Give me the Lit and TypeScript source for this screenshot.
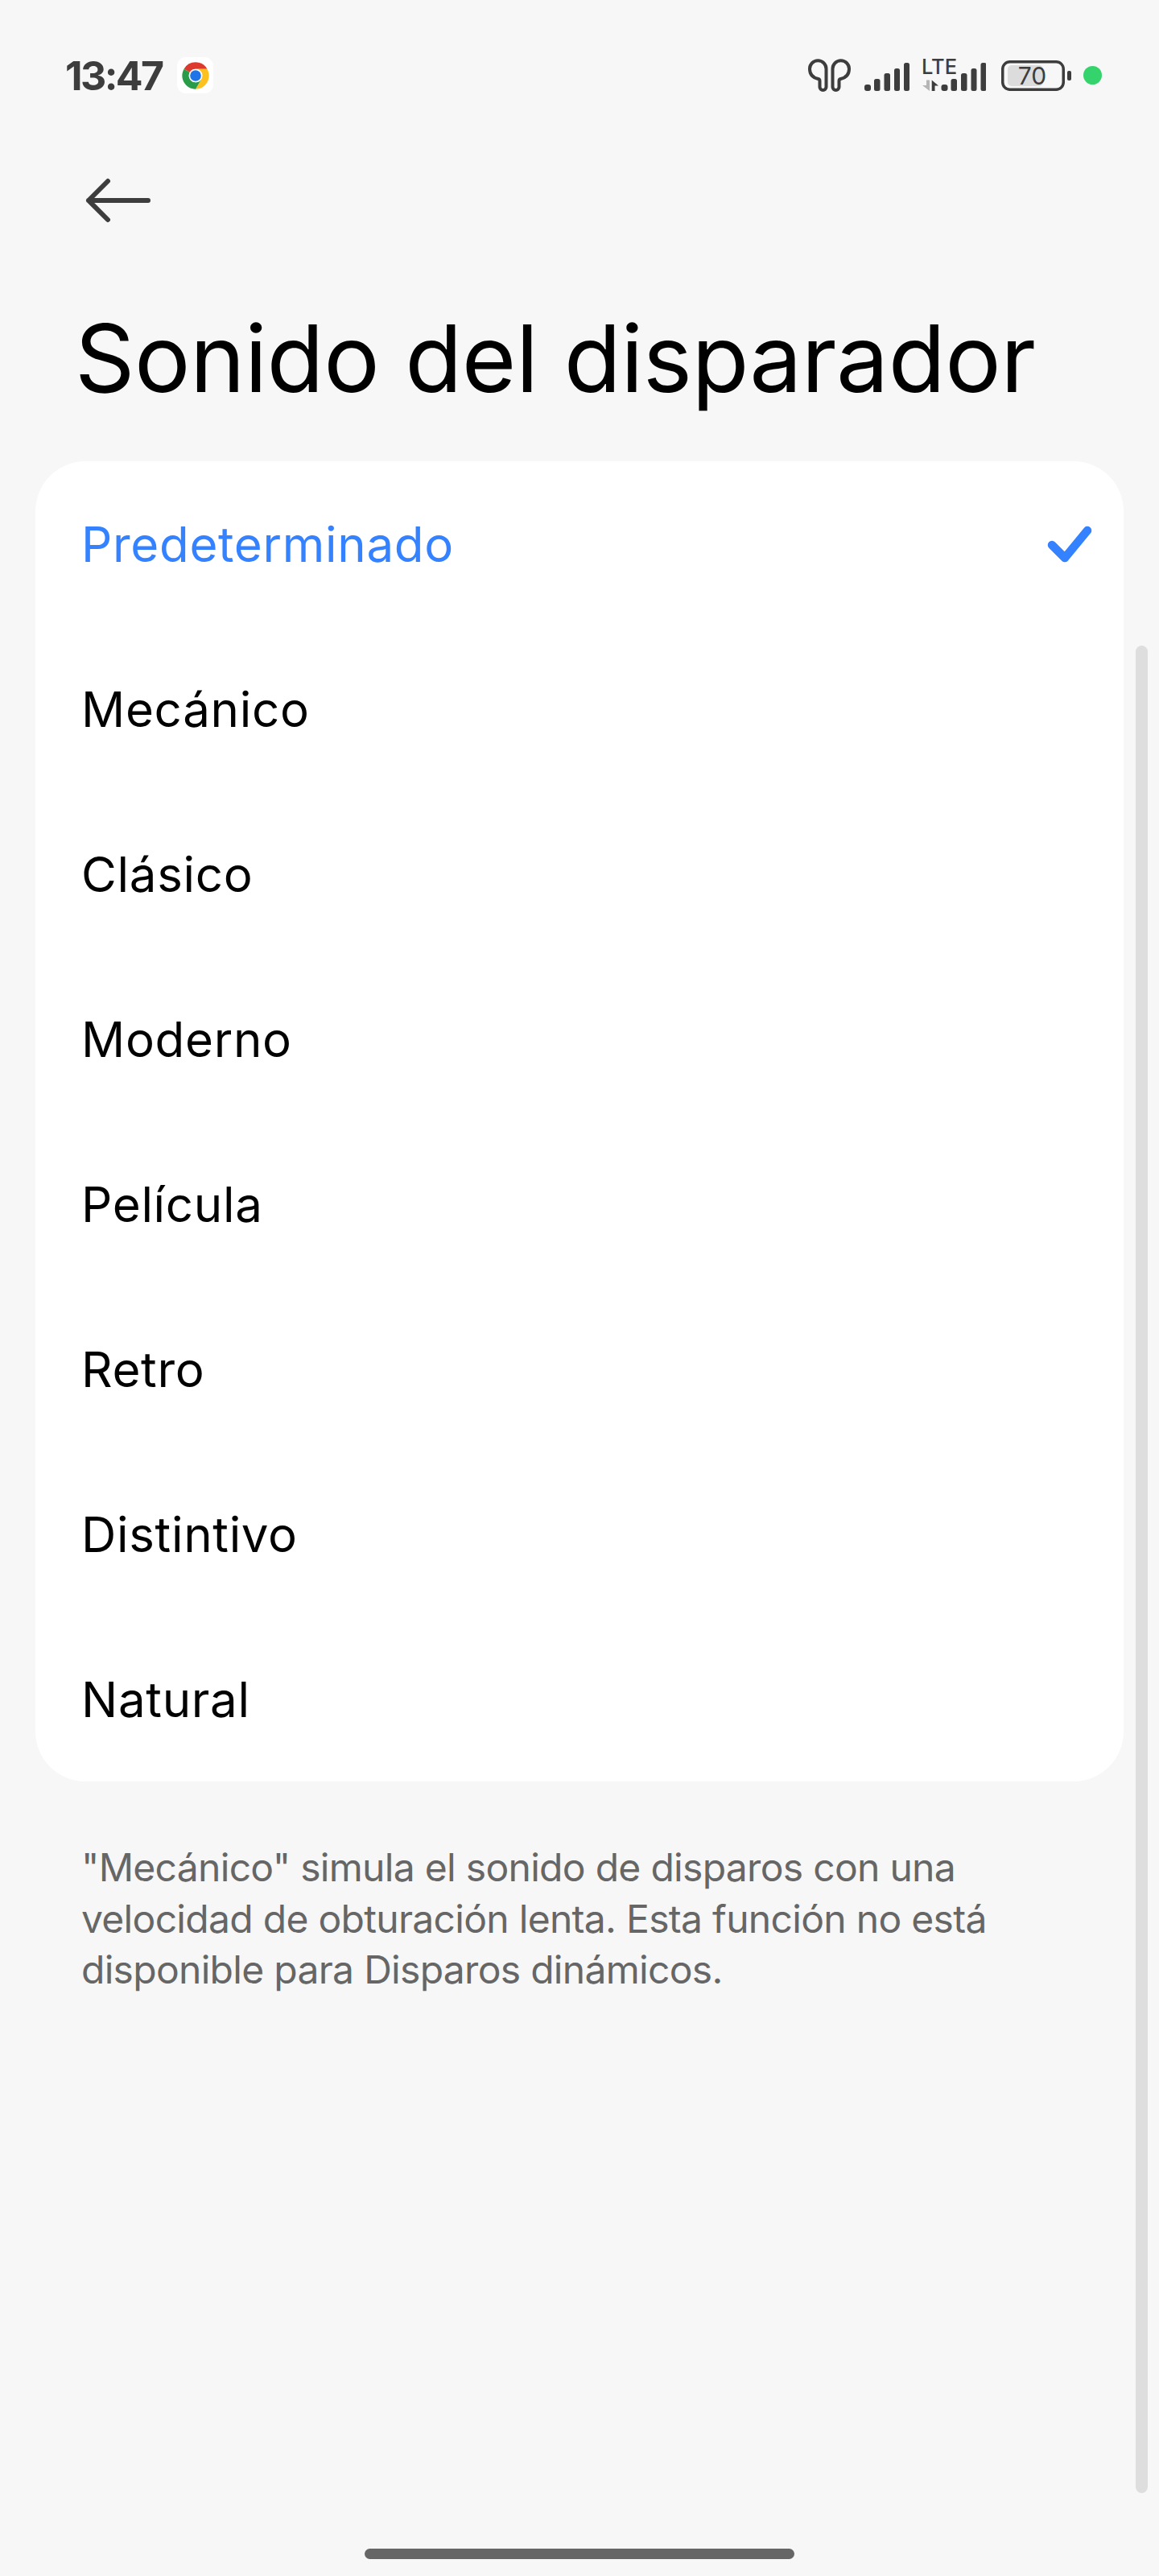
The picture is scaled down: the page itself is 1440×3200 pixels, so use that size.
import { LitElement, html, css, svg } from "lit";
import { customElement } from "lit/decorators.js";

const OPTIONS = ["Predeterminado", "Mecánico", "Clásico", "Moderno", "Película", "Retro", "Distintivo", "Natural"];

const bars = (x0: number) => svg`
  <rect x="${x0}" y="27" width="8" height="8" rx="3" />
  <rect x="${x0 + 12}" y="20" width="7.5" height="15" rx="2.5" />
  <rect x="${x0 + 24.5}" y="13" width="7.5" height="22" rx="2.5" />
  <rect x="${x0 + 37}" y="7" width="7" height="28" rx="2.5" />
  <rect x="${x0 + 49}" y="0" width="7" height="35" rx="2.5" />`;

@customElement("app-root")
export class AppRoot extends LitElement {
  static styles = css`
    :host {
      display: block;
      position: relative;
      width: 1440px;
      height: 3200px;
      background: #f7f7f7;
      overflow: hidden;
      font-family: Inter, "Noto Sans", sans-serif;
    }
    .status {
      height: 187px;
      display: flex;
      align-items: center;
      padding: 0 71px 0 81px;
      box-sizing: border-box;
      color: #3d3d3d;
    }
    .time {
      flex: none;
      width: 115px;
      white-space: nowrap;
      font-family: Inter, sans-serif;
      font-size: 50px;
      font-weight: 700;
      letter-spacing: -2.6px;
      line-height: 1;
    }
    .chrome {
      flex: none;
      width: 45px;
      height: 45px;
      margin-left: 24px;
      background: #fff;
      border-radius: 11px;
      display: flex;
      align-items: center;
      justify-content: center;
    }
    .right {
      margin-left: auto;
      display: flex;
      align-items: center;
    }
    .right svg { display: block; flex: none; }
    .buds { margin-right: 17px; }
    .sig { margin-right: 15px; margin-top: 3px; }
    .lte { margin-right: 19px; }
    .batt { margin-right: 15px; }
    .dot {
      width: 23.5px;
      height: 23.5px;
      border-radius: 50%;
      background: #34d36b;
    }
    .nav {
      height: 124px;
      display: flex;
      align-items: center;
      padding-left: 104px;
    }
    h1 {
      margin: 0;
      padding: 16px 0 0 93px;
      height: 262px;
      box-sizing: border-box;
      font-size: 116px;
      font-weight: 400;
      line-height: 236px;
      letter-spacing: -0.5px;
      color: #000;
    }
    .card {
      margin: 0 44px;
      background: #fff;
      border-radius: 62px;
    }
    .row {
      height: 205px;
      display: flex;
      align-items: center;
      justify-content: space-between;
      padding: 0 37px 0 57px;
      font-size: 60px;
      letter-spacing: 0.7px;
      color: #000;
    }
    .row.sel { color: #3482ff; }
    .note {
      margin: 0;
      padding: 75px 101px 0;
      font-size: 48px;
      letter-spacing: -0.7px;
      line-height: 63.5px;
      color: #666;
    }
    .scroll {
      position: absolute;
      left: 1411px;
      top: 802px;
      width: 15px;
      height: 2295px;
      border-radius: 8px;
      background: #dedede;
    }
    .home {
      position: absolute;
      left: 453px;
      top: 3166px;
      width: 534px;
      height: 13px;
      border-radius: 7px;
      background: #666;
    }
  `;

  render() {
    return html`
      <div class="status">
        <span class="time">13:47</span>
        <span class="chrome">
          <svg width="40" height="40" viewBox="0 0 48 48">
            <path fill="#dd3a2e" d="M24 4A20 20 0 0 1 41.32 14H24a10 10 0 0 0-8.66 5L6.68 14A20 20 0 0 1 24 4z" />
            <path fill="#fcc11e" d="M41.32 14A20 20 0 0 1 24 44L32.66 29A10 10 0 0 0 24 14H41.32z" />
            <path fill="#2a9b48" d="M24 44A20 20 0 0 1 6.68 14L15.34 19A10 10 0 0 0 32.66 29z" />
            <circle cx="24" cy="24" r="10" fill="#fff" />
            <circle cx="24" cy="24" r="8.2" fill="#1f74e8" />
          </svg>
        </span>
        <div class="right">
          <svg class="buds" width="53" height="41" viewBox="0 0 53 41" fill="none" stroke="#3d3d3d" stroke-width="4" stroke-linejoin="round">
            <path d="M14.5 35V27.5Q14.5 25.5 12.5 25C6 23.5 2 19 2 12.5A10.25 10.25 0 0 1 22.5 12.5V35A4 4 0 0 1 14.5 35Z" />
            <path d="M38.5 35V27.5Q38.5 25.5 40.5 25C47 23.5 51 19 51 12.5A10.25 10.25 0 0 0 30.5 12.5V35A4 4 0 0 0 38.5 35Z" />
          </svg>
          <svg class="sig" width="56" height="35" viewBox="0 0 56 35" fill="#3d3d3d">${bars(0)}</svg>
          <svg class="lte" width="80" height="56" viewBox="0 -8 80 56" fill="#3d3d3d">
            <text x="0" y="18" font-family="Inter, sans-serif" font-size="25.5" font-weight="500">LTE</text>
            <path fill="#b5b5b5" d="M6 25.5H10V39L1 32H6Z" />
            <path d="M12.7 25.5L21 32.5H16.5V39H12.7Z" />
            <g transform="translate(24.5 4)">${bars(0)}</g>
          </svg>
          <svg class="batt" width="87" height="38" viewBox="0 0 87 38">
            <rect x="8" y="6" width="44" height="26" rx="5" fill="#dcdcdc" />
            <rect x="1.75" y="1.75" width="75.5" height="34.5" rx="9" fill="none" stroke="#3d3d3d" stroke-width="3.5" />
            <rect x="82" y="13" width="5" height="12" rx="2" fill="#3d3d3d" />
            <text x="38.5" y="30" text-anchor="middle" font-family="Inter, sans-serif" font-size="30" font-weight="400" fill="#3d3d3d">70</text>
          </svg>
          <span class="dot"></span>
        </div>
      </div>
      <div class="nav">
        <svg width="85" height="60" viewBox="0 0 85 60" fill="none" stroke="#3d3d3d" stroke-width="6" stroke-linecap="round" stroke-linejoin="round">
          <path d="M80 30H6M30 6L6 30L30 54" />
        </svg>
      </div>
      <h1>Sonido del disparador</h1>
      <div class="card">
        ${OPTIONS.map(
          (o, i) => html`<div class="row ${i === 0 ? "sel" : ""}">
            <span>${o}</span>
            ${i === 0
              ? html`<svg width="60" height="50" viewBox="0 0 60 50" fill="none" stroke="#3482ff" stroke-width="10.5" stroke-linecap="round" stroke-linejoin="round">
                  <path d="M8 26L24 42L52 8" />
                </svg>`
              : ""}
          </div>`
        )}
      </div>
      <p class="note">"Mecánico" simula el sonido de disparos con una<br />velocidad de obturación lenta. Esta función no está<br />disponible para Disparos dinámicos.</p>
      <div class="scroll"></div>
      <div class="home"></div>
    `;
  }
}
